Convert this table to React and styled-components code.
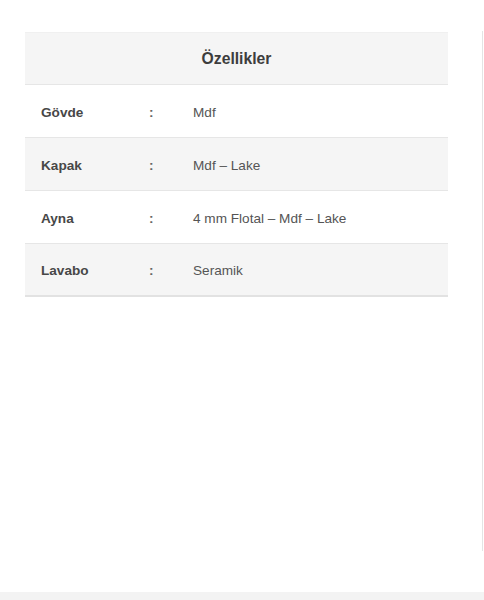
import React from "react";
import styled, { createGlobalStyle } from "styled-components";

const Global = createGlobalStyle`
  html, body { margin: 0; padding: 0; background: #fff; }
  body { font-family: "Liberation Sans", Arial, sans-serif; }
`;

const Page = styled.div`
  width: 484px;
  height: 600px;
  display: flex;
  flex-direction: column;
  overflow: hidden;
`;

const Body = styled.div`
  flex: 1;
  display: flex;
  padding-top: 31px;
`;

const Column = styled.div`
  width: 483px;
  height: 520px;
  border-right: 1px solid #e4e4e4;
  padding-left: 25px;
  padding-top: 1px;
  box-sizing: border-box;
`;

const Table = styled.div`
  width: 423px;
  display: flex;
  flex-direction: column;
`;

const Header = styled.div`
  height: 53px;
  background: #f5f5f5;
  border-top: 1px solid #f0f0f0;
  border-bottom: 1px solid #e6e6e6;
  display: flex;
  align-items: center;
  justify-content: center;
  font-size: 15.7px;
  font-weight: 700;
  color: #3d3d3d;
  box-sizing: border-box;
`;

const Row = styled.div`
  height: 53px;
  box-sizing: border-box;
  display: grid;
  grid-template-columns: 108px 44px 1fr;
  align-items: center;
  padding-left: 16px;
  padding-top: 2px;
  background: ${(p) => (p.$shaded ? "#f5f5f5" : "#ffffff")};
  border-bottom: ${(p) => (p.$last ? "2px solid #e2e2e2" : "1px solid #e6e6e6")};
  font-size: 13.6px;
`;

const Label = styled.span`
  font-weight: 700;
  color: #474747;
`;

const Colon = styled.span`
  font-weight: 700;
  color: #666;
`;

const Value = styled.span`
  color: #555;
`;

const Footer = styled.div`
  height: 8px;
  background: #f3f3f3;
`;

const rows = [
  ["Gövde", "Mdf"],
  ["Kapak", "Mdf – Lake"],
  ["Ayna", "4 mm Flotal – Mdf – Lake"],
  ["Lavabo", "Seramik"],
];

export default function App() {
  return (
    <Page>
      <Global />
      <Body>
        <Column>
          <Table>
            <Header>Özellikler</Header>
            {rows.map(([k, v], i) => (
              <Row key={k} $shaded={i % 2 === 1} $last={i === rows.length - 1}>
                <Label>{k}</Label>
                <Colon>:</Colon>
                <Value>{v}</Value>
              </Row>
            ))}
          </Table>
        </Column>
      </Body>
      <Footer />
    </Page>
  );
}
